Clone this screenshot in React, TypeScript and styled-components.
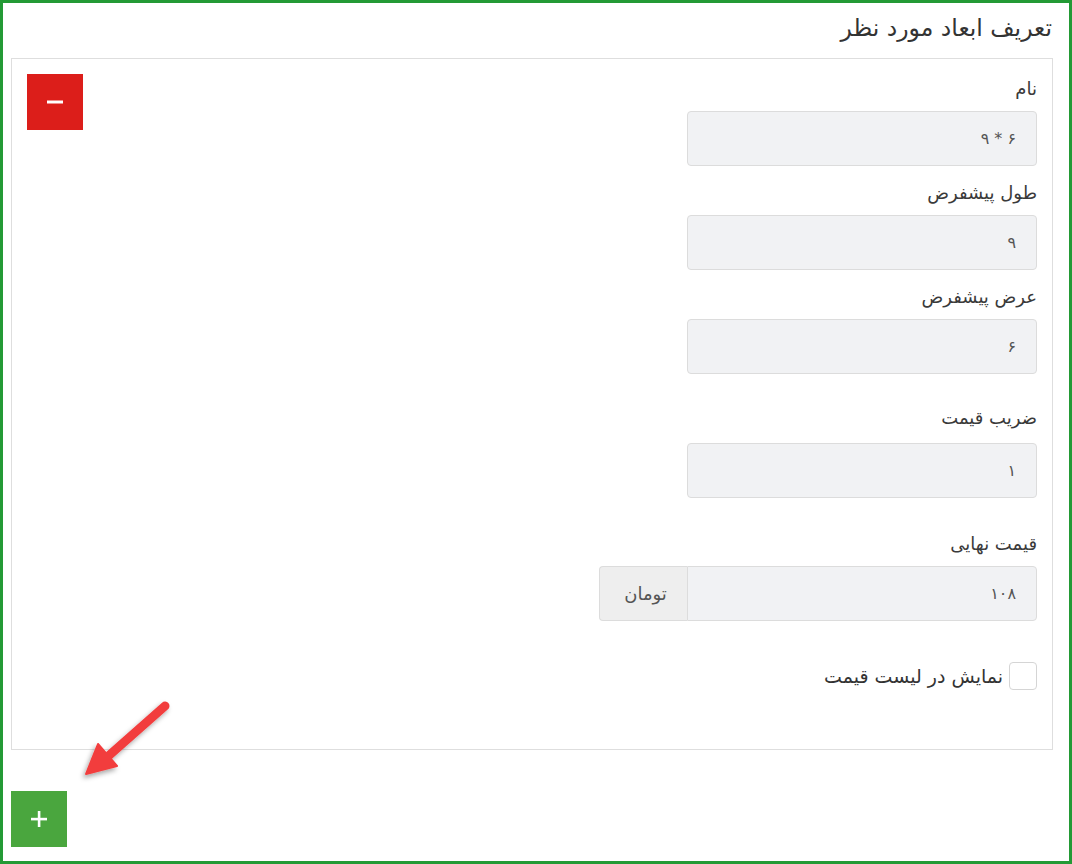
import React from "react";
import styled, { createGlobalStyle } from "styled-components";

const GlobalStyle = createGlobalStyle`
  body {
    margin: 0;
    background: #fff;
    font-family: "DejaVu Sans", sans-serif;
  }
  * {
    box-sizing: border-box;
  }
`;

const Frame = styled.div`
  position: relative;
  width: 1072px;
  height: 864px;
  border: 3px solid #239a35;
  padding: 8px 16px 0 8px;
  direction: rtl;
  font-family: "DejaVu Sans", sans-serif;
  color: #333;
`;

const Title = styled.h2`
  margin: 0 1px 0 0;
  height: 47px;
  padding-top: 1px;
  font-size: 23.5px;
  font-weight: normal;
  line-height: 32px;
  color: #333;
`;

const Panel = styled.div`
  display: flex;
  justify-content: space-between;
  align-items: flex-start;
  height: 692px;
  border: 1px solid #dedede;
  padding: 15px;
`;

const Fields = styled.div`
  display: flex;
  flex-direction: column;
  align-items: flex-start;
  padding-top: 4px;
`;

const Field = styled.div<{ $top: number }>`
  display: flex;
  flex-direction: column;
  align-items: flex-start;
  margin-top: ${(p) => p.$top}px;
`;

const Label = styled.label<{ $gap: number }>`
  font-size: 18px;
  line-height: 22px;
  color: #3a3a3a;
  margin-bottom: ${(p) => p.$gap}px;
`;

const Input = styled.div<{ $grouped?: boolean }>`
  display: flex;
  align-items: center;
  width: 350px;
  height: 55px;
  padding: 0 20px;
  background: #f1f2f4;
  border: 1px solid #dcdcdc;
  border-radius: ${(p) => (p.$grouped ? "0 4px 4px 0" : "4px")};
  font-size: 16px;
  color: #555;
`;

const Group = styled.div`
  display: flex;
`;

const Addon = styled.div`
  display: flex;
  align-items: center;
  justify-content: center;
  width: 88px;
  height: 55px;
  padding-left: 4px;
  background: #eeeeee;
  border: 1px solid #dcdcdc;
  border-right: none;
  border-radius: 4px 0 0 4px;
  font-size: 18px;
  color: #555;
`;

const CheckRow = styled.label`
  display: flex;
  align-items: center;
  gap: 6px;
  margin-top: 41px;
  font-size: 19px;
  color: #333;
`;

const CheckBox = styled.span`
  width: 28px;
  height: 28px;
  border: 1px solid #d5d5d5;
  border-radius: 4px;
  background: #fff;
`;

const SquareButton = styled.button<{ $color: string }>`
  display: flex;
  align-items: center;
  justify-content: center;
  width: 56px;
  height: 56px;
  padding: 0;
  border: none;
  background: ${(p) => p.$color};
  cursor: pointer;
`;

const AddRow = styled.div`
  display: flex;
  justify-content: flex-end;
  margin-top: 41px;
  margin-right: -8px;
`;

const Arrow = styled.svg`
  position: absolute;
  left: 0;
  top: 0;
  pointer-events: none;
`;

const fields = [
  { label: "نام", value: "۶ * ۹", top: 0, gap: 11 },
  { label: "طول پیشفرض", value: "۹", top: 16, gap: 11 },
  { label: "عرض پیشفرض", value: "۶", top: 16, gap: 11 },
  { label: "ضریب قیمت", value: "۱", top: 33, gap: 14 },
];

const App = () => {
  return (
    <>
      <GlobalStyle />
      <Frame>
        <Title>تعریف ابعاد مورد نظر</Title>
        <Panel>
          <Fields>
            {fields.map((f) => (
              <Field key={f.label} $top={f.top}>
                <Label $gap={f.gap}>{f.label}</Label>
                <Input>{f.value}</Input>
              </Field>
            ))}
            <Field $top={35}>
              <Label $gap={11}>قیمت نهایی</Label>
              <Group>
                <Input $grouped>۱۰۸</Input>
                <Addon>تومان</Addon>
              </Group>
            </Field>
            <CheckRow>
              <CheckBox />
              نمایش در لیست قیمت
            </CheckRow>
          </Fields>
          <SquareButton $color="#dc1e1a" aria-label="remove">
            <svg width="16" height="4" viewBox="0 0 16 4">
              <rect x="0" y="0.5" width="16" height="3" fill="#fff" />
            </svg>
          </SquareButton>
        </Panel>
        <AddRow>
          <SquareButton $color="#4aa63e" aria-label="add">
            <svg width="16" height="16" viewBox="0 0 16 16">
              <rect x="6.8" y="0" width="2.6" height="16" fill="#fff" />
              <rect x="0" y="6.8" width="16" height="2.6" fill="#fff" />
            </svg>
          </SquareButton>
        </AddRow>
        <Arrow width="1072" height="864" viewBox="0 0 1072 864">
          <defs>
            <filter id="shadow" x="-50%" y="-50%" width="200%" height="200%">
              <feDropShadow dx="-2" dy="3" stdDeviation="2.5" floodColor="#000" floodOpacity="0.35" />
            </filter>
          </defs>
          <g filter="url(#shadow)" fill="#f23d3d" stroke="#f23d3d">
            <line x1="162" y1="703" x2="102" y2="756" strokeWidth="9" strokeLinecap="round" />
            <polygon points="83,771 95,741 114,763" strokeWidth="2" strokeLinejoin="round" />
          </g>
        </Arrow>
      </Frame>
    </>
  );
};

export default App;
